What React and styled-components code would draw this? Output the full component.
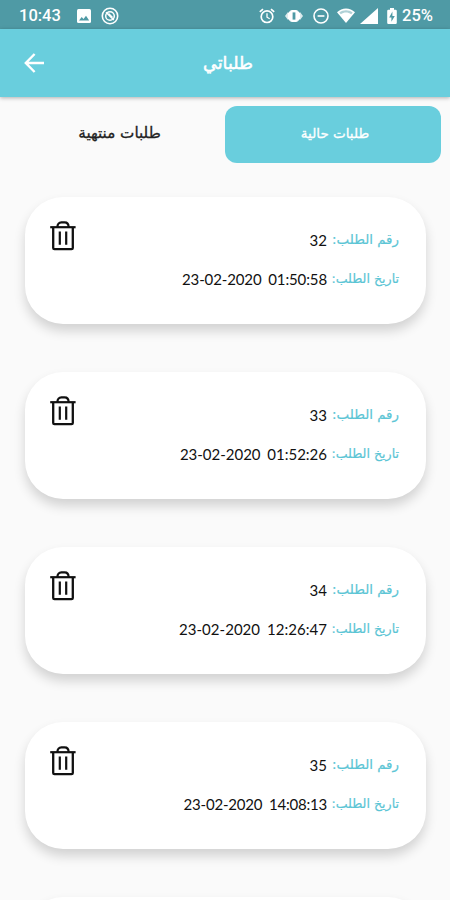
import styled, { createGlobalStyle } from "styled-components";

const colorPrimary = "#69cedd";
const colorStatus = "#4f9aa5";
const colorFondo = "#fafafa";

const pedidos = [
  { id: 32, fecha: "23-02-2020 01:50:58", espacio: -0.12 },
  { id: 33, fecha: "23-02-2020 01:52:26", espacio: -0.01 },
  { id: 34, fecha: "23-02-2020 12:26:47", espacio: 0.04 },
  { id: 35, fecha: "23-02-2020 14:08:13", espacio: -0.2 },
];

const ImageIcon = () => (
  <svg width="14" height="14" viewBox="0 0 14 14">
    <rect width="14" height="14" rx="1.5" fill="#fff" />
    <path d="M2 11.5 4.7 8l1.8 2.1L9 6.8l3.2 4.7z" fill={colorStatus} />
  </svg>
);

const BlockedIcon = () => (
  <svg width="18" height="18" viewBox="0 0 18 18" fill="none" stroke="#fff">
    <circle cx="9" cy="9" r="7.7" strokeWidth="1.6" />
    <circle cx="9" cy="9" r="4.3" strokeWidth="1.5" />
    <path d="M5 5.2 12.8 13M7.5 6.5l4 4" strokeWidth="1.5" />
  </svg>
);

const AlarmIcon = () => (
  <svg width="16" height="16" viewBox="0 0 16 16" fill="none" stroke="#fff">
    <circle cx="8" cy="8.7" r="5.8" strokeWidth="1.7" />
    <path d="M.8 3.8 4 1.1M15.2 3.8 12 1.1" strokeWidth="1.7" />
    <path d="M8 5.2v4l2.7 1.5" strokeWidth="1.3" />
  </svg>
);

const VibrateIcon = () => (
  <svg width="18" height="14" viewBox="0 0 18 14">
    <path d="M0 7l3-4v8zM18 7l-3-4v8z" fill="#fff" opacity=".8" />
    <path d="M3 4 5.5 1.6v10.8L3 10zM15 4l-2.5-2.4v10.8L15 10z" fill="#fff" />
    <rect x="5" y="1" width="8" height="12" rx="2" fill="#fff" />
    <rect x="7.6" y="3.4" width="2.8" height="7.2" fill={colorStatus} />
  </svg>
);

const SilentIcon = () => (
  <svg width="16" height="16" viewBox="0 0 16 16" fill="none" stroke="#fff" strokeWidth="1.6">
    <circle cx="8" cy="8" r="7" />
    <path d="M4.6 8h6.8" />
  </svg>
);

const WifiIcon = () => (
  <svg width="18" height="15" viewBox="0 0 18 15">
    <path d="M0 4.2C5-.9 13-.9 18 4.2L9 15z" fill="#fff" />
    <path d="M2.3 4.6C6.2 1.4 11.8 1.4 15.7 4.6L14.2 6.3C11 4 7 4 3.8 6.3z" fill={colorStatus} opacity=".45" />
  </svg>
);

const SignalIcon = () => (
  <svg width="18" height="16" viewBox="0 0 18 16">
    <path d="M18 0v16H0z" fill="#fff" />
  </svg>
);

const BatteryIcon = () => (
  <svg width="10" height="16" viewBox="0 0 10 16">
    <path d="M3 0h4v1.7h1.6q1.2 0 1.2 1.2v11.9Q9.8 16 8.6 16H1.4Q.2 16 .2 14.8V2.9q0-1.2 1.2-1.2H3z" fill="#fff" />
    <path d="M5.4 3.6 2.2 9.4h2.2v4.4l3.4-5.8H5.4z" fill={colorStatus} />
  </svg>
);

const BackIcon = () => (
  <svg width="20" height="20" viewBox="0 0 20 20" fill="none" stroke="#fff" strokeWidth="2.4">
    <path d="M20 10H2M10.6 1 1.8 10l8.8 9" />
  </svg>
);

const TrashIcon = () => (
  <svg width="26" height="30" viewBox="0 0 26 30" fill="none" stroke="#111">
    <path d="M.2 6.2h25.4" strokeWidth="2.2" />
    <path d="M7.4 6C7.4 3.2 9 1.4 11.4 1.4h3.2c2.4 0 4 1.8 4 4.6" strokeWidth="2.2" />
    <path d="M3.2 6.5v20.4q0 1.3 1.3 1.3h17q1.3 0 1.3-1.3V6.5" strokeWidth="2.3" />
    <path d="M9.8 10.6v13.2M16.2 10.6v13.2" strokeWidth="2.2" />
  </svg>
);

const Pedido = ({ id, fecha, espacio }) => (
  <Card>
    <Datos>
      <Linea>
        <Etiqueta $size="13.4px">رقم الطلب:</Etiqueta>
        <Valor>{id}</Valor>
      </Linea>
      <Linea>
        <Etiqueta $size="12.6px">تاريخ الطلب:</Etiqueta>
        <Valor $espacio={espacio}>{fecha}</Valor>
      </Linea>
    </Datos>
    <BtnBorrar aria-label="حذف">
      <TrashIcon />
    </BtnBorrar>
  </Card>
);

const App = () => {
  return (
    <>
      <GlobalStyle />
      <Pantalla>
        <StatusBar>
          <Hora>10:43</Hora>
          <Notificaciones>
            <ImageIcon />
            <BlockedIcon />
          </Notificaciones>
          <Sistema>
            <AlarmIcon />
            <VibrateIcon />
            <SilentIcon />
            <Red>
              <WifiIcon />
              <SignalIcon />
            </Red>
            <Bateria>
              <BatteryIcon />
              25%
            </Bateria>
          </Sistema>
        </StatusBar>
        <Header>
          <BtnVolver aria-label="رجوع">
            <BackIcon />
          </BtnVolver>
          <Titulo>طلباتي</Titulo>
        </Header>
        <Tabs>
          <Tab $activo>طلبات حالية</Tab>
          <Tab>طلبات منتهية</Tab>
        </Tabs>
        <Lista>
          {pedidos.map((pedido) => (
            <Pedido key={pedido.id} {...pedido} />
          ))}
          <Card />
        </Lista>
      </Pantalla>
    </>
  );
};

export default App;

const GlobalStyle = createGlobalStyle`
  * {
    box-sizing: border-box;
  }

  body {
    margin: 0;
    background-color: ${colorFondo};
    font-family: "DejaVu Sans", sans-serif;
  }

  button {
    border: 0;
    padding: 0;
    background: none;
    font-family: inherit;
  }

  svg {
    display: block;
    flex: none;
  }
`;

const Pantalla = styled.main`
  width: 450px;
  height: 900px;
  overflow: hidden;
  display: flex;
  flex-direction: column;
  background-color: ${colorFondo};
`;

const StatusBar = styled.div`
  flex: none;
  height: 29px;
  display: flex;
  align-items: center;
  padding: 2px 17px 0 19px;
  background-color: ${colorStatus};
  color: #fff;
  font-family: Roboto, sans-serif;
  font-size: 16.5px;
  font-weight: 500;
`;

const Hora = styled.span`
  width: 58px;
`;

const Notificaciones = styled.div`
  display: flex;
  align-items: center;
  gap: 10px;
`;

const Sistema = styled.div`
  display: flex;
  align-items: center;
  gap: 10px;
  margin-left: auto;
`;

const Red = styled.div`
  display: flex;
  align-items: center;
  gap: 5px;
  margin-left: -2px;
`;

const Bateria = styled.div`
  display: flex;
  align-items: center;
  gap: 5px;
  margin-left: -1px;
`;

const Header = styled.header`
  flex: none;
  height: 68px;
  display: grid;
  grid-template-columns: 68px 1fr 62px;
  align-items: center;
  background-color: ${colorPrimary};
  box-shadow: 0 1px 4px rgba(0, 0, 0, 0.3);
`;

const BtnVolver = styled.button`
  justify-self: center;
`;

const Titulo = styled.h1`
  margin: 0;
  text-align: center;
  direction: rtl;
  color: #fff;
  font-size: 17.5px;
  font-weight: 500;
  line-height: 24px;
  -webkit-text-stroke: 0.5px #fff;
`;

const Tabs = styled.nav`
  flex: none;
  display: flex;
  direction: rtl;
  padding: 9px 9px 0 12px;
`;

const Tab = styled.button`
  width: ${({ $activo }) => ($activo ? "216px" : "211px")};
  height: 57px;
  padding: ${({ $activo }) => ($activo ? "0 4px 4px 0" : "0 0 4px")};
  padding-left: ${({ $activo }) => ($activo ? "8px" : "0")};
  border-radius: 12px;
  direction: rtl;
  background-color: ${({ $activo }) => ($activo ? colorPrimary : "transparent")};
  color: ${({ $activo }) => ($activo ? "#fff" : "#222")};
  font-size: ${({ $activo }) => ($activo ? "13.5px" : "15.2px")};
  font-weight: 500;
  -webkit-text-stroke: 0.3px currentColor;
`;

const Lista = styled.section`
  display: flex;
  flex-direction: column;
  gap: 48.5px;
  padding: 34px 24px 0 25px;
`;

const Card = styled.article`
  flex: none;
  height: 126.5px;
  display: flex;
  justify-content: space-between;
  direction: rtl;
  padding: 24px 27px 0 25px;
  border-radius: 38px;
  background-color: #fff;
  box-shadow: 0 7px 12px rgba(0, 0, 0, 0.16);
`;

const Datos = styled.div`
  display: flex;
  flex-direction: column;
`;

const Linea = styled.div`
  height: 39px;
  display: flex;
  gap: 5px;
  line-height: 38px;
`;

const Etiqueta = styled.span`
  width: 67px;
  flex: none;
  white-space: nowrap;
  color: #5bc5d5;
  font-size: ${({ $size }) => $size};
  -webkit-text-stroke: 0.2px currentColor;
`;

const Valor = styled.span`
  direction: ltr;
  white-space: nowrap;
  color: #111;
  font-family: Lato, sans-serif;
  font-size: 15px;
  letter-spacing: ${({ $espacio = 0 }) => $espacio}px;
  word-spacing: 3px;
`;

const BtnBorrar = styled.button`
  align-self: flex-start;
`;
